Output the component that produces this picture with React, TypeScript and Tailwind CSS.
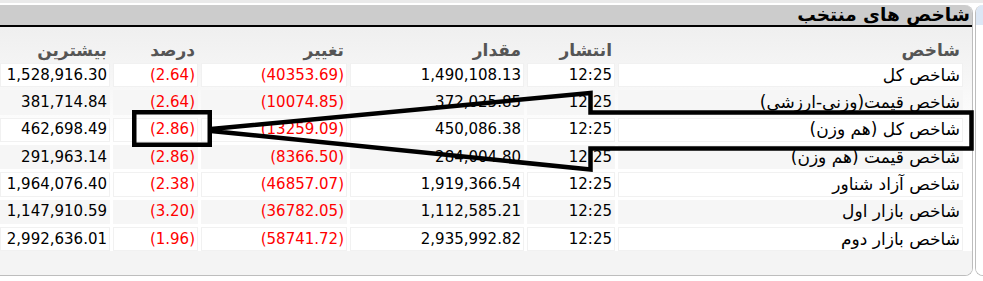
import React from "react";

type Row = { name: string; t: string; v: string; c: string; p: string; m: string };

const rows: Row[] = [
  { name: "شاخص کل", t: "12:25", v: "1,490,108.13", c: "(40353.69)", p: "(2.64)", m: "1,528,916.30" },
  { name: "شاخص قيمت(وزني-ارزشي)", t: "12:25", v: "372,025.85", c: "(10074.85)", p: "(2.64)", m: "381,714.84" },
  { name: "شاخص کل (هم وزن)", t: "12:25", v: "450,086.38", c: "(13259.09)", p: "(2.86)", m: "462,698.49" },
  { name: "شاخص قيمت (هم وزن)", t: "12:25", v: "284,004.80", c: "(8366.50)", p: "(2.86)", m: "291,963.14" },
  { name: "شاخص آزاد شناور", t: "12:25", v: "1,919,366.54", c: "(46857.07)", p: "(2.38)", m: "1,964,076.40" },
  { name: "شاخص بازار اول", t: "12:25", v: "1,112,585.21", c: "(36782.05)", p: "(3.20)", m: "1,147,910.59" },
  { name: "شاخص بازار دوم", t: "12:25", v: "2,935,992.82", c: "(58741.72)", p: "(1.96)", m: "2,992,636.01" },
];

function Cell({ w, children, odd, red }: { w: string; children: React.ReactNode; odd: boolean; red?: boolean }) {
  return (
    <div
      className={`${w} h-[24.33px] flex items-center pr-[2px] border ${
        odd ? "bg-white border-[#f1f1f1]" : "bg-[#f6f6f6] border-[#f6f6f6]"
      } ${red ? "text-[#ff0000]" : "text-black"}`}
    >
      {children}
    </div>
  );
}

export default function App() {
  return (
    <div className="relative w-[983px] h-[281px] bg-white overflow-hidden font-['DejaVu_Sans',sans-serif]">
      <div className="h-[3px] bg-[#eaeaea]" />
      <div className="flex mt-[2px] h-[271px]">
        <div className="w-[973px] flex flex-col border-r border-b border-[#bdbdbd] rounded-tr-[8px] rounded-br-[8px] overflow-hidden bg-white">
          <div
            dir="rtl"
            className="h-[22px] shrink-0 bg-[#cccccc] border-b-2 border-black flex items-center pr-[2px] text-[18.5px] font-bold leading-none text-black"
          >
            شاخص های منتخب
          </div>
          <div dir="rtl" className="flex flex-col gap-[3px] pr-[9px] bg-gradient-to-b from-[#efefef] via-white to-white">
            <div className="h-[33px] pt-[13px] flex gap-[3px] text-[17px] leading-none font-bold text-[#555555]">
              <div className="w-[345px] pr-[3px] flex items-center">شاخص</div>
              <div className="w-[88px] pr-[3px] flex items-center">انتشار</div>
              <div className="w-[174px] pr-[3px] flex items-center">مقدار</div>
              <div className="w-[146px] pr-[3px] flex items-center">تغییر</div>
              <div className="w-[85px] pr-[3px] flex items-center">درصد</div>
              <div className="w-[110px] pr-[3px] flex items-center">بیشترین</div>
            </div>
            {rows.map((r, i) => {
              const odd = i % 2 === 0;
              return (
                <div key={i} className="flex gap-[3px] text-[15px] leading-none">
                  <Cell w="w-[345px]" odd={odd}><span className="text-[17px]">{r.name}</span></Cell>
                  <Cell w="w-[88px]" odd={odd}><span dir="ltr">{r.t}</span></Cell>
                  <Cell w="w-[174px]" odd={odd}><span dir="ltr">{r.v}</span></Cell>
                  <Cell w="w-[146px]" odd={odd} red><span dir="ltr">{r.c}</span></Cell>
                  <Cell w="w-[85px]" odd={odd} red><span dir="ltr">{r.p}</span></Cell>
                  <Cell w="w-[110px]" odd={odd}><span dir="ltr">{r.m}</span></Cell>
                </div>
              );
            })}
          </div>
          <div className="flex-1 bg-[#f4f4f4]" />
        </div>
        <div className="flex-1 ml-[2px] flex flex-col border-l border-b border-[#bdbdbd] rounded-tl-[8px] rounded-bl-[8px] overflow-hidden">
          <div className="h-[20px] bg-[#dce7f5]" />
          <div className="flex-1 bg-white" />
        </div>
      </div>
      <svg className="absolute inset-0 pointer-events-none" width="983" height="281" viewBox="0 0 983 281">
        <rect x="134.25" y="112.25" width="75.5" height="32.5" fill="none" stroke="#000" strokeWidth="4.5" />
        <polyline
          points="211,129 590.5,93 590.5,112.5 971.5,112.5 971.5,148.5 590.5,148.5 590.5,169.5 211,131"
          fill="none"
          stroke="#000"
          strokeWidth="4.5"
          strokeLinejoin="miter"
        />
      </svg>
    </div>
  );
}
